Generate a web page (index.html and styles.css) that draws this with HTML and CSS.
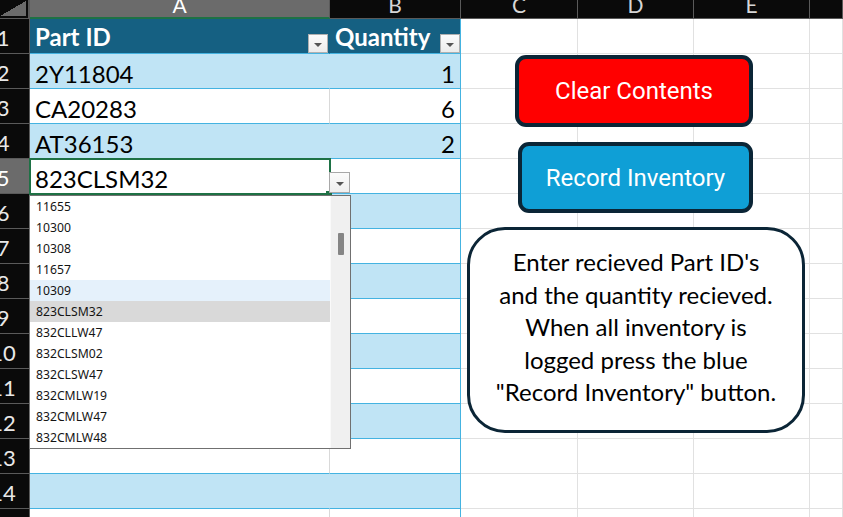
FILE: index.html
```html
<!DOCTYPE html>
<html>
<head>
<meta charset="utf-8">
<link rel="stylesheet" href="styles.css">
</head>
<body>
<div class="sheet">
  <div class="grid">
    <div class="corner"><div class="tri"></div></div>
    <div class="colh sel">A</div><div class="colh">B</div><div class="colh">C</div><div class="colh">D</div><div class="colh">E</div><div class="colh"></div>

    <div class="rowh"><span>1</span></div><div class="c ta th">Part ID<i class="filter"></i></div><div class="c tb th">Quantity<i class="filter last"></i></div><div class="c"></div><div class="c"></div><div class="c"></div><div class="c"></div>
    <div class="rowh"><span>2</span></div><div class="c ta band">2Y11804</div><div class="c tb band num">1</div><div class="c"></div><div class="c"></div><div class="c"></div><div class="c"></div>
    <div class="rowh"><span>3</span></div><div class="c ta">CA20283</div><div class="c tb num">6</div><div class="c"></div><div class="c"></div><div class="c"></div><div class="c"></div>
    <div class="rowh"><span>4</span></div><div class="c ta band">AT36153</div><div class="c tb band num">2</div><div class="c"></div><div class="c"></div><div class="c"></div><div class="c"></div>
    <div class="rowh selrow"><span>5</span></div><div class="c ta">823CLSM32</div><div class="c tb"></div><div class="c"></div><div class="c"></div><div class="c"></div><div class="c"></div>
    <div class="rowh"><span>6</span></div><div class="c ta band"></div><div class="c tb band"></div><div class="c"></div><div class="c"></div><div class="c"></div><div class="c"></div>
    <div class="rowh"><span>7</span></div><div class="c ta"></div><div class="c tb"></div><div class="c"></div><div class="c"></div><div class="c"></div><div class="c"></div>
    <div class="rowh"><span>8</span></div><div class="c ta band"></div><div class="c tb band"></div><div class="c"></div><div class="c"></div><div class="c"></div><div class="c"></div>
    <div class="rowh"><span>9</span></div><div class="c ta"></div><div class="c tb"></div><div class="c"></div><div class="c"></div><div class="c"></div><div class="c"></div>
    <div class="rowh"><span>10</span></div><div class="c ta band"></div><div class="c tb band"></div><div class="c"></div><div class="c"></div><div class="c"></div><div class="c"></div>
    <div class="rowh"><span>11</span></div><div class="c ta"></div><div class="c tb"></div><div class="c"></div><div class="c"></div><div class="c"></div><div class="c"></div>
    <div class="rowh"><span>12</span></div><div class="c ta band"></div><div class="c tb band"></div><div class="c"></div><div class="c"></div><div class="c"></div><div class="c"></div>
    <div class="rowh"><span>13</span></div><div class="c ta"></div><div class="c tb"></div><div class="c"></div><div class="c"></div><div class="c"></div><div class="c"></div>
    <div class="rowh"><span>14</span></div><div class="c ta band"></div><div class="c tb band"></div><div class="c"></div><div class="c"></div><div class="c"></div><div class="c"></div>
    <div class="rowh"><span>15</span></div><div class="c ta"></div><div class="c tb"></div><div class="c"></div><div class="c"></div><div class="c"></div><div class="c"></div>
  </div>

  <div class="active"><div class="handle"></div></div>
  <div class="ddbtn"><i></i></div>

  <div class="list">
    <div class="items">
      <div class="item">11655</div>
      <div class="item">10300</div>
      <div class="item">10308</div>
      <div class="item">11657</div>
      <div class="item hover">10309</div>
      <div class="item chosen">823CLSM32</div>
      <div class="item">832CLLW47</div>
      <div class="item">832CLSM02</div>
      <div class="item">832CLSW47</div>
      <div class="item">832CMLW19</div>
      <div class="item">832CMLW47</div>
      <div class="item">832CMLW48</div>
    </div>
    <div class="scroll"><div class="thumb"></div></div>
  </div>

  <div class="btn clear">Clear Contents</div>
  <div class="btn record">Record Inventory</div>
  <div class="note">Enter recieved Part ID's<br>and the quantity recieved.<br>When all inventory is<br>logged press the blue<br>"Record Inventory" button.</div>
</div>
</body>
</html>
```

FILE: styles.css
```css
html, body {
  margin: 0;
  padding: 0;
  background: #ffffff;
  overflow: hidden;
}

.sheet {
  position: relative;
  width: 843px;
  height: 517px;
  overflow: hidden;
  font-family: Lato, "Open Sans", sans-serif;
}

.grid {
  display: grid;
  grid-template-columns: 30px 300px 131px 117px 116px 116px 1fr;
  grid-template-rows: 19px repeat(15, 35px);
}

.grid > div {
  box-sizing: border-box;
}

.corner {
  background: #0a0a0a;
  border-right: 2px solid #5a5a5a;
  border-bottom: 1px solid #5a5a5a;
  padding: 1px 2px 2px 0;
}

.tri {
  width: 100%;
  height: 100%;
  background: linear-gradient(to bottom right, transparent 50%, #6b6b6b 50%);
}

.colh {
  background: #0a0a0a;
  color: #d6d6d6;
  border-right: 1px solid #5a5a5a;
  border-bottom: 1px solid #5a5a5a;
  display: flex;
  align-items: flex-end;
  justify-content: center;
  font-size: 21px;
  line-height: 21px;
  padding-bottom: 3px;
  overflow: hidden;
}

.colh.sel {
  background: #6b6b6b;
  color: #ffffff;
  border-bottom: 2px solid #1e7145;
  padding-bottom: 2px;
}

.rowh {
  background: #0a0a0a;
  color: #e8e8e8;
  border-right: 1px solid #5a5a5a;
  border-bottom: 1px solid #5a5a5a;
  overflow: hidden;
  display: flex;
  align-items: center;
  font-size: 22px;
  padding-top: 2px;
}

.rowh span {
  display: flex;
  justify-content: center;
  width: 6px;
  flex: none;
  white-space: nowrap;
}

.rowh.selrow {
  background: #6b6b6b;
  color: #ffffff;
}

.c {
  border-right: 1px solid #e1e1e1;
  border-bottom: 1px solid #e1e1e1;
  background: #ffffff;
}

.ta, .tb {
  display: flex;
  align-items: center;
  font-size: 24px;
  color: #000000;
  padding: 4px 5px 0 5px;
  white-space: nowrap;
  border-bottom: 1px solid #44b3e1;
}

.ta {
  border-right: 1px solid #d9d9d9;
}

.tb {
  border-right: 1px solid #44b3e1;
}

.band {
  background: #c0e4f5;
}

.ta.band {
  border-right-color: #c0e4f5;
}

.num {
  justify-content: flex-end;
}

.th {
  background: #156082;
  color: #ffffff;
  font-weight: 700;
  padding: 0 0 0 5px;
}

.ta.th {
  border-right-color: #156082;
}

.filter {
  margin-left: auto;
  align-self: flex-end;
  width: 20px;
  height: 19px;
  box-sizing: border-box;
  border: 1px solid #b0b0b0;
  background: linear-gradient(#fbfbfb, #ececec);
  display: flex;
  align-items: center;
  justify-content: center;
  margin-right: 1px;
}

.filter.last {
  margin-right: 0;
}

.filter::after,
.ddbtn i {
  content: "";
  display: block;
  width: 0;
  height: 0;
  border-left: 4px solid transparent;
  border-right: 4px solid transparent;
  border-top: 4px solid #555555;
  margin-top: 2px;
}

.active {
  position: absolute;
  left: 29px;
  top: 158px;
  width: 302px;
  height: 37px;
  border: 2px solid #1e7145;
  box-sizing: border-box;
}

.handle {
  position: absolute;
  right: -3px;
  bottom: -3px;
  width: 6px;
  height: 5px;
  background: #1e7145;
}

.ddbtn {
  position: absolute;
  left: 329px;
  top: 172px;
  width: 21px;
  height: 21px;
  box-sizing: border-box;
  border: 1px solid #a8a8a8;
  background: linear-gradient(#fbfbfb, #efefef);
  display: flex;
  align-items: center;
  justify-content: center;
}

.list {
  position: absolute;
  left: 29px;
  top: 195px;
  width: 322px;
  height: 254px;
  box-sizing: border-box;
  border: 1px solid #707070;
  background: #ffffff;
  display: flex;
}

.items {
  width: 300px;
  flex: none;
}

.item {
  height: 21px;
  line-height: 22px;
  padding-left: 6px;
  font-family: "Noto Sans", "Open Sans", sans-serif;
  font-size: 12.2px;
  color: #141414;
}

.item.hover {
  background: #e5f1fb;
}

.item.chosen {
  background: #d9d9d9;
}

.scroll {
  flex: 1;
  background: #f0f0f0;
  border-left: 1px solid #fafafa;
}

.thumb {
  width: 6px;
  height: 22px;
  margin: 37px 0 0 7px;
  background: #858585;
  border-radius: 1px;
}

.btn {
  position: absolute;
  box-sizing: border-box;
  border: 4px solid #0b2536;
  border-radius: 11px;
  display: flex;
  align-items: center;
  justify-content: center;
  color: #ffffff;
  font-family: Roboto, "Noto Sans", sans-serif;
  font-size: 24px;
}

.clear {
  left: 515px;
  top: 55px;
  width: 238px;
  height: 72px;
  background: #ff0000;
}

.record {
  left: 518px;
  top: 142px;
  width: 235px;
  height: 71px;
  background: #0f9fd6;
}

.note {
  position: absolute;
  left: 467px;
  top: 227px;
  width: 338px;
  height: 206px;
  box-sizing: border-box;
  border: 3.5px solid #0b2536;
  border-radius: 38px;
  background: #ffffff;
  display: flex;
  align-items: center;
  justify-content: center;
  text-align: center;
  font-family: Lato, "Open Sans", sans-serif;
  font-size: 24px;
  line-height: 32.5px;
  color: #000000;
  padding-bottom: 5px;
}
```
